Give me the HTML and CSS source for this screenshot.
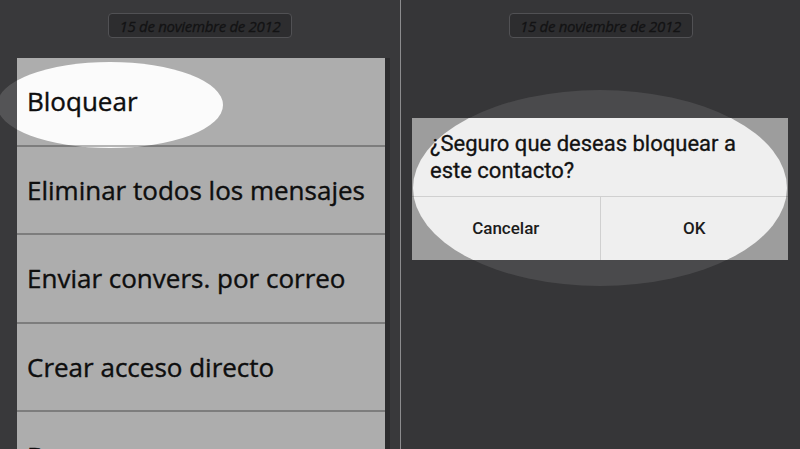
FILE: index.html
```html
<!DOCTYPE html>
<html lang="es">
<head>
<meta charset="utf-8">
<title>Bloquear contacto</title>
<link rel="stylesheet" href="styles.css">
</head>
<body>
<div class="screen">
  <section class="panel panel-left">
    <div class="date-row"><span class="date-pill">15 de noviembre de 2012</span></div>
    <div class="spot spot-left-outer"></div>
    <ul class="menu">
      <li class="spot spot-left-inner"></li>
      <li class="menu-item">Bloquear</li>
      <li class="menu-item">Eliminar todos los mensajes</li>
      <li class="menu-item">Enviar convers. por correo</li>
      <li class="menu-item">Crear acceso directo</li>
      <li class="menu-item">Borrar</li>
    </ul>
  </section>
  <div class="divider"></div>
  <section class="panel panel-right">
    <div class="date-row"><span class="date-pill">15 de noviembre de 2012</span></div>
    <div class="spot spot-right-outer"></div>
    <div class="dialog">
      <div class="spot spot-right-inner"></div>
      <p class="dialog-msg">¿Seguro que deseas bloquear a este contacto?</p>
      <div class="dialog-buttons">
        <button class="dlg-btn">Cancelar</button>
        <button class="dlg-btn">OK</button>
      </div>
    </div>
  </section>
</div>
</body>
</html>
```

FILE: styles.css
```css
* { box-sizing: border-box; }
html, body { margin: 0; padding: 0; }
body {
  width: 800px;
  height: 449px;
  overflow: hidden;
  background: #37373a;
  font-family: "Open Sans", "DejaVu Sans", sans-serif;
}
.screen {
  display: flex;
  width: 800px;
  height: 449px;
}
.panel {
  position: relative;
  height: 449px;
  overflow: hidden;
}
.panel-left {
  width: 400px;
  background: #39393b;
  padding: 13px 0 0 17px;
}
.divider {
  width: 1px;
  background: #8c8c8e;
  box-shadow: -2px 0 0 #2c2c2e;
}
.panel-right {
  width: 399px;
  background: #363638;
  padding: 13px 0 0 11px;
}
.date-row {
  display: flex;
  justify-content: center;
  height: 25px;
}
.panel-left .date-row { margin-left: -17px; }
.panel-right .date-row { margin-left: -11px; }
.date-pill {
  display: flex;
  align-items: center;
  justify-content: center;
  width: 184px;
  height: 25px;
  border: 1px solid #515154;
  border-radius: 4px;
  background: #2d2d2f;
  color: #131314;
  font-style: italic;
  font-size: 15px;
  letter-spacing: -0.3px;
  white-space: nowrap;
  -webkit-text-stroke: 0.3px #131314;
}
.spot {
  position: absolute;
  border-radius: 50%;
  pointer-events: none;
}
.spot-left-outer {
  left: -3px;
  top: 62px;
  width: 226px;
  height: 86px;
  background: rgba(255,255,255,0.14);
}
.menu {
  position: relative;
  list-style: none;
  margin: 20px 0 0 0;
  padding: 0;
  width: 368px;
  background: #adadad;
  overflow: hidden;
  box-shadow: 5px 0 0 #2c2c2e;
}
.spot-left-inner {
  left: -20px;
  top: 4px;
  width: 226px;
  height: 86px;
  background: #fbfbfb;
}
.menu-item {
  position: relative;
  height: 88.6px;
  display: flex;
  align-items: center;
  padding-left: 10px;
  font-size: 26px;
  color: #0e0e0e;
  -webkit-text-stroke: 0.4px #0e0e0e;
  border-bottom: 2px solid rgba(0,0,0,0.28);
  white-space: nowrap;
}
.spot-right-outer {
  left: 12px;
  top: 90px;
  width: 374px;
  height: 196px;
  background: rgba(255,255,255,0.1);
}
.dialog {
  position: relative;
  margin-top: 80px;
  width: 376px;
  height: 142px;
  background: #9d9d9d;
  overflow: hidden;
  display: flex;
  flex-direction: column;
}
.spot-right-inner {
  left: 1px;
  top: -28px;
  width: 374px;
  height: 196px;
  background: #efefef;
}
.dialog-msg {
  position: relative;
  margin: 0;
  height: 79px;
  padding: 12px 20px 0 18px;
  font-family: Roboto, "Noto Sans", sans-serif;
  font-size: 22px;
  line-height: 27px;
  color: #121212;
  -webkit-text-stroke: 0.3px #121212;
  border-bottom: 1px solid rgba(0,0,0,0.13);
}
.dialog-buttons {
  position: relative;
  flex: 1;
  display: flex;
}
.dlg-btn {
  flex: 1;
  border: 0;
  background: transparent;
  padding: 0 0 2px 0;
  font-family: Roboto, "Noto Sans", sans-serif;
  font-size: 17px;
  font-weight: 500;
  color: #1c1c1c;
}
.dlg-btn + .dlg-btn {
  border-left: 1px solid rgba(0,0,0,0.13);
}
```
